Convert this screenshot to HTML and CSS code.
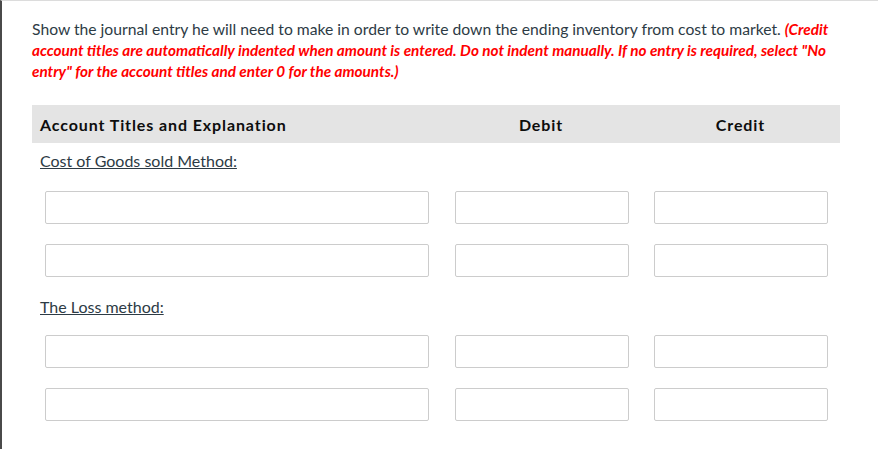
FILE: index.html
```html
<!DOCTYPE html>
<html>
<head>
<meta charset="utf-8">
<link rel="stylesheet" href="styles.css">
</head>
<body>
<div class="frame">
  <p class="prompt">Show the journal entry he will need to make in order to write down the ending inventory from cost to market. <em class="note">(Credit account titles are automatically indented when amount is entered. Do not indent manually. If no entry is required, select "No entry" for the account titles and enter 0 for the amounts.)</em></p>
  <div class="journal">
    <div class="head">
      <div class="col-acct">Account Titles and Explanation</div>
      <div class="col-debit">Debit</div>
      <div class="col-credit">Credit</div>
    </div>
    <div class="section">Cost of Goods sold Method:</div>
    <div class="row">
      <div class="col-acct"><input class="field" type="text"></div>
      <div class="col-debit"><input class="field" type="text"></div>
      <div class="col-credit"><input class="field" type="text"></div>
    </div>
    <div class="row">
      <div class="col-acct"><input class="field" type="text"></div>
      <div class="col-debit"><input class="field" type="text"></div>
      <div class="col-credit"><input class="field" type="text"></div>
    </div>
    <div class="section section-tight">The Loss method:</div>
    <div class="row">
      <div class="col-acct"><input class="field" type="text"></div>
      <div class="col-debit"><input class="field" type="text"></div>
      <div class="col-credit"><input class="field" type="text"></div>
    </div>
    <div class="row">
      <div class="col-acct"><input class="field" type="text"></div>
      <div class="col-debit"><input class="field" type="text"></div>
      <div class="col-credit"><input class="field" type="text"></div>
    </div>
  </div>
</div>
</body>
</html>
```

FILE: styles.css
```css
html, body {
  margin: 0;
  padding: 0;
  background: #fff;
}
body {
  font-family: Lato, "Open Sans", sans-serif;
  color: #2d3b45;
  height: 449px;
  overflow: hidden;
}
.frame {
  border-left: 2px solid #4a4a4a;
  border-top: 1px solid #dcdcdc;
  height: 448px;
  padding: 0 38px 0 30px;
}
.prompt {
  margin: 0;
  padding-top: 18px;
  font-size: 15.7px;
  line-height: 21px;
  width: 808px;
}
.note {
  color: #ff0000;
  font-weight: bold;
  font-style: italic;
  font-size: 15.3px;
}
.journal {
  width: 808px;
  margin-top: 23px;
}
.head {
  display: flex;
  background: #e4e4e4;
  height: 38px;
  align-items: center;
  font-weight: bold;
  font-size: 16px;
  letter-spacing: 0.9px;
  color: #0d0d0d;
  margin-bottom: 8px;
}
.head .col-acct {
  padding-left: 8px;
}
.head .col-debit,
.head .col-credit {
  text-align: center;
}
.col-acct {
  width: 409px;
  box-sizing: border-box;
}
.col-debit {
  width: 200px;
  box-sizing: border-box;
}
.col-credit {
  width: 199px;
  box-sizing: border-box;
}
.section {
  font-size: 16px;
  line-height: 20px;
  padding: 0 0 0 8px;
  height: 38px;
  box-sizing: border-box;
  text-decoration: underline;
}
.section-tight {
  padding-top: 2px;
}
.row {
  display: flex;
  height: 53px;
}
.row .col-acct {
  padding-left: 13px;
  padding-right: 12px;
}
.row .col-debit {
  padding-left: 14px;
  padding-right: 12px;
}
.row .col-credit {
  padding-left: 13px;
  padding-right: 12px;
}
.field {
  display: block;
  width: 100%;
  height: 33px;
  margin: 2px 0 0 0;
  box-sizing: border-box;
  border: 1px solid #cccccc;
  border-radius: 2px;
  padding: 0 6px;
  font: inherit;
  background: #fff;
}
```
